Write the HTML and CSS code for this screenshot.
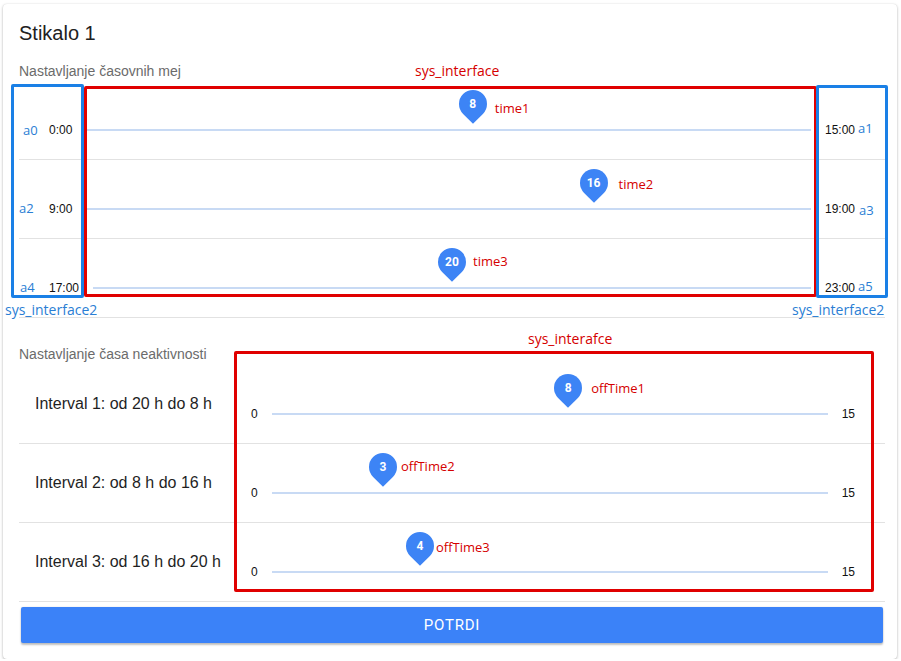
FILE: index.html
```html
<!DOCTYPE html>
<html lang="sl">
<head>
<meta charset="utf-8">
<title>Stikalo 1</title>
<link rel="stylesheet" href="styles.css">
</head>
<body>
<div class="card">
  <h1 class="title">Stikalo 1</h1>

  <div class="section-title first">Nastavljanje časovnih mej</div>
  <div class="rows rows-limits">
    <div class="row">
      <div class="slider slider-wide">
        <span class="val">0:00</span>
        <div class="track">
          <div class="pin" style="left:53.33%">8<span class="pin-label lbl-time1">time1</span></div>
        </div>
        <span class="val">15:00</span>
      </div>
    </div>
    <div class="row">
      <div class="slider slider-wide">
        <span class="val">9:00</span>
        <div class="track">
          <div class="pin" style="left:70%">16<span class="pin-label lbl-time2">time2</span></div>
        </div>
        <span class="val">19:00</span>
      </div>
    </div>
    <div class="row">
      <div class="slider slider-wide">
        <span class="val">17:00</span>
        <div class="track">
          <div class="pin" style="left:50%">20<span class="pin-label lbl-time3">time3</span></div>
        </div>
        <span class="val">23:00</span>
      </div>
    </div>

    <div class="note red-text sys1">sys_interface</div>
    <div class="box red-box box-limits"></div>
    <div class="box blue-box box-left">
      <span class="note blue-text tag tag-a0">a0</span>
      <span class="note blue-text tag tag-a2">a2</span>
      <span class="note blue-text tag tag-a4">a4</span>
    </div>
    <div class="box blue-box box-right">
      <span class="note blue-text tag tag-a1">a1</span>
      <span class="note blue-text tag tag-a3">a3</span>
      <span class="note blue-text tag tag-a5">a5</span>
    </div>
    <div class="note blue-text sys2-left">sys_interface2</div>
    <div class="note blue-text sys2-right">sys_interface2</div>
  </div>

  <div class="section-title second">Nastavljanje časa neaktivnosti</div>
  <div class="rows rows-off">
    <div class="row row-split">
      <div class="interval">Interval 1: od 20 h do 8 h</div>
      <div class="slider slider-narrow">
        <span class="val">0</span>
        <div class="track">
          <div class="pin" style="left:53.33%">8<span class="pin-label lbl-off1">offTime1</span></div>
        </div>
        <span class="val">15</span>
      </div>
    </div>
    <div class="row row-split">
      <div class="interval">Interval 2: od 8 h do 16 h</div>
      <div class="slider slider-narrow">
        <span class="val">0</span>
        <div class="track">
          <div class="pin" style="left:20%">3<span class="pin-label lbl-off2">offTime2</span></div>
        </div>
        <span class="val">15</span>
      </div>
    </div>
    <div class="row row-split">
      <div class="interval">Interval 3: od 16 h do 20 h</div>
      <div class="slider slider-narrow">
        <span class="val">0</span>
        <div class="track">
          <div class="pin" style="left:26.67%">4<span class="pin-label lbl-off3">offTime3</span></div>
        </div>
        <span class="val">15</span>
      </div>
    </div>

    <div class="note red-text sys-off">sys_interafce</div>
    <div class="box red-box box-off"></div>
  </div>

  <button class="confirm" type="button">POTRDI</button>
</div>
</body>
</html>
```

FILE: styles.css
```css
* { box-sizing: border-box; }

html, body {
  margin: 0;
  background: #ffffff;
}

body {
  padding: 4px 4px 0 3px;
  font-family: "Liberation Sans", Arial, sans-serif;
  color: #212121;
}

.card {
  width: 894px;
  background: #fff;
  border-radius: 4px;
  box-shadow: 0 1px 3px rgba(0, 0, 0, 0.28), 0 0 1px rgba(0, 0, 0, 0.12);
  padding: 17px 12px 16px 16px;
}

.title {
  margin: 0;
  font-size: 20px;
  line-height: 24px;
  font-weight: 400;
  color: #212121;
}

.section-title {
  font-size: 14px;
  line-height: 16px;
  color: #6b6b6b;
}

.section-title.first {
  margin-top: 18px;
  margin-bottom: 2px;
}

.section-title.second {
  margin-top: 28px;
  margin-bottom: 3px;
}

.rows {
  position: relative;
}

.row {
  display: flow-root;
  height: 79px;
  border-bottom: 1px solid #e2e2e2;
}

.row-split {
  display: grid;
  grid-template-columns: 216px 1fr;
  align-items: start;
}

.interval {
  padding-left: 16px;
  font-size: 16px;
  line-height: 20px;
  align-self: center;
  margin-top: -1px;
  color: #1f1f1f;
}

.slider {
  display: flex;
  align-items: center;
  height: 18px;
  margin-top: 40px;
  padding-right: 30px;
}

.slider-wide { padding-left: 30px; }
.slider-narrow { padding-left: 16px; }

.val {
  font-size: 12px;
  line-height: 18px;
  color: #111;
  white-space: nowrap;
}

.track {
  position: relative;
  flex: 1;
  height: 2px;
  margin: 0 14px;
  background: #c8daf4;
}

.pin {
  position: absolute;
  top: -39px;
  width: 28px;
  height: 28px;
  margin-left: -14px;
  z-index: 2;
  display: flex;
  align-items: center;
  justify-content: center;
  color: #fff;
  font-family: Roboto, "Liberation Sans", sans-serif;
  font-weight: 700;
  font-size: 12px;
}

.pin::before {
  content: "";
  position: absolute;
  inset: 0;
  background: #3d84f5;
  border-radius: 50% 50% 0 50%;
  transform: rotate(45deg);
  z-index: -1;
}

.pin-label {
  position: absolute;
  left: 100%;
  top: 50%;
  transform: translateY(-50%);
  white-space: nowrap;
  font-family: "Open Sans", sans-serif;
  font-weight: 400;
  font-size: 13px;
  line-height: 18px;
  color: #d50000;
}

.lbl-time1 { margin-left: 8px; margin-top: 4px; }
.lbl-time2 { margin-left: 11px; margin-top: 1px; }
.lbl-time3 { margin-left: 7px; margin-top: -1px; }
.lbl-off1 { margin-left: 9px; }
.lbl-off2 { margin-left: 4px; margin-top: -1px; }
.lbl-off3 { margin-left: 2px; margin-top: 1px; }

/* annotation overlays */
.note {
  position: absolute;
  font-family: "Open Sans", sans-serif;
  font-size: 14px;
  line-height: 18px;
  white-space: nowrap;
  z-index: 5;
}

.red-text { color: #d50000; }
.blue-text { color: #2a7ed4; }

.box {
  position: absolute;
  z-index: 4;
  pointer-events: none;
}

.red-box { border: 3px solid #e00000; border-radius: 2px; }
.blue-box { border: 3px solid #1a80e6; border-radius: 2px; }

.sys1 { left: 396px; top: -19px; }
.box-limits { left: 65px; top: 5px; width: 733px; height: 211px; }
.box-left { left: -8px; top: 3px; width: 73px; height: 214px; }
.box-right { left: 797px; top: 4px; width: 72px; height: 213px; }
.sys2-left { left: -14px; top: 220px; }
.sys2-right { left: 773px; top: 220px; }

.tag { font-size: 13px; }
.tag-a0 { left: 9px; top: 34px; }
.tag-a2 { left: 5px; top: 112px; }
.tag-a4 { left: 6px; top: 191px; }
.tag-a1 { left: 39px; top: 31px; }
.tag-a3 { left: 40px; top: 113px; }
.tag-a5 { left: 39px; top: 189px; }

.sys-off { left: 509px; top: -35px; }
.box-off { left: 215px; top: -14px; width: 640px; height: 241px; }

.confirm {
  display: block;
  width: calc(100% - 4px);
  margin: 5px 2px 0 2px;
  height: 36px;
  border: 0;
  border-radius: 2px;
  background: #3b82f8;
  color: #fff;
  font-family: Roboto, "Liberation Sans", sans-serif;
  font-size: 15px;
  letter-spacing: 0.8px;
  box-shadow: 0 2px 2px rgba(0, 0, 0, 0.24), 0 0 2px rgba(0, 0, 0, 0.12);
}
```
